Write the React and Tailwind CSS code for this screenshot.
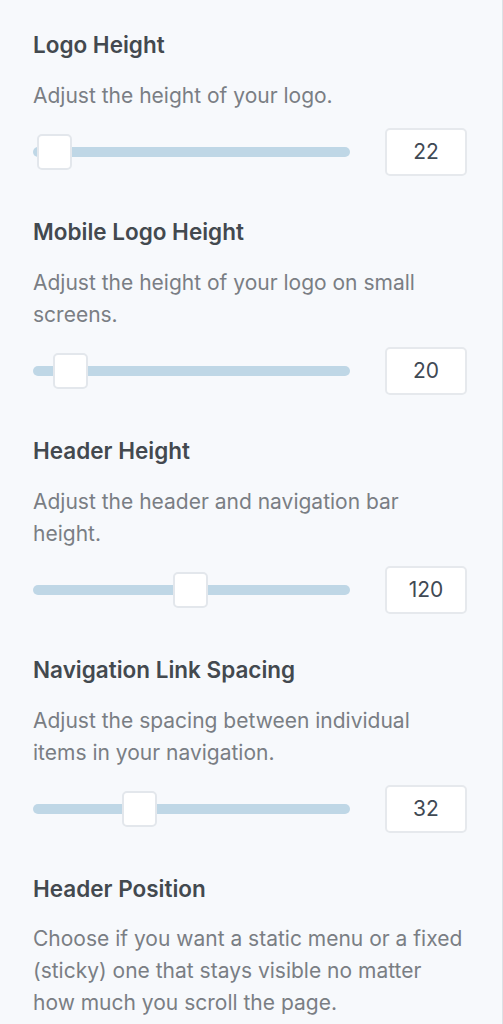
import React from "react";

const settings = [
  { title: "Logo Height", desc: "Adjust the height of your logo.", value: 22, thumb: 4 },
  { title: "Mobile Logo Height", desc: "Adjust the height of your logo on small screens.", value: 20, thumb: 20 },
  { title: "Header Height", desc: "Adjust the header and navigation bar height.", value: 120, thumb: 140 },
  { title: "Navigation Link Spacing", desc: "Adjust the spacing between individual items in your navigation.", value: 32, thumb: 89 },
];

const Slider = ({ value, thumb }) => (
  <div className="flex h-12 items-center">
    <div className="relative h-[10px] w-[317px] rounded-full bg-[#bfd7e6]">
      <div
        className="absolute top-1/2 h-[36px] w-[35px] -translate-y-1/2 rounded-[5px] border-2 border-[#e3e7ec] bg-white"
        style={{ left: thumb }}
      />
    </div>
    <div className="ml-[35px] flex h-12 w-[82px] items-center justify-center rounded-[5px] border-2 border-[#e6e9ed] bg-white text-[21px] text-[#3f4954]">
      {value}
    </div>
  </div>
);

const App = () => {
  return (
    <div
      className="min-h-[1024px] w-[503px] overflow-hidden border-r border-[#dde1e6] bg-[#f7f9fc] pl-[33px] pr-[30px] pt-[31px]"
      style={{ fontFamily: "Inter, 'Noto Sans', sans-serif" }}
    >
      <div className="flex flex-col gap-[42px]">
        {settings.map((s) => (
          <div key={s.title} className="flex flex-col">
            <h2 className="text-[22.5px] font-semibold leading-[28px] text-[#43494f]">{s.title}</h2>
            <p className="mt-[21px] max-w-[432px] text-[21px] leading-[32px] text-[#7a7e84]">{s.desc}</p>
            <div className="mt-4">
              <Slider value={s.value} thumb={s.thumb} />
            </div>
          </div>
        ))}
        <div className="flex flex-col">
          <h2 className="text-[22.5px] font-semibold leading-[28px] text-[#43494f]">Header Position</h2>
          <p className="mt-[20px] max-w-[432px] text-[21px] leading-[32px] text-[#7a7e84]">
            Choose if you want a static menu or a fixed (sticky) one that stays visible no matter how much you scroll the page.
          </p>
        </div>
      </div>
    </div>
  );
};

export default App;
